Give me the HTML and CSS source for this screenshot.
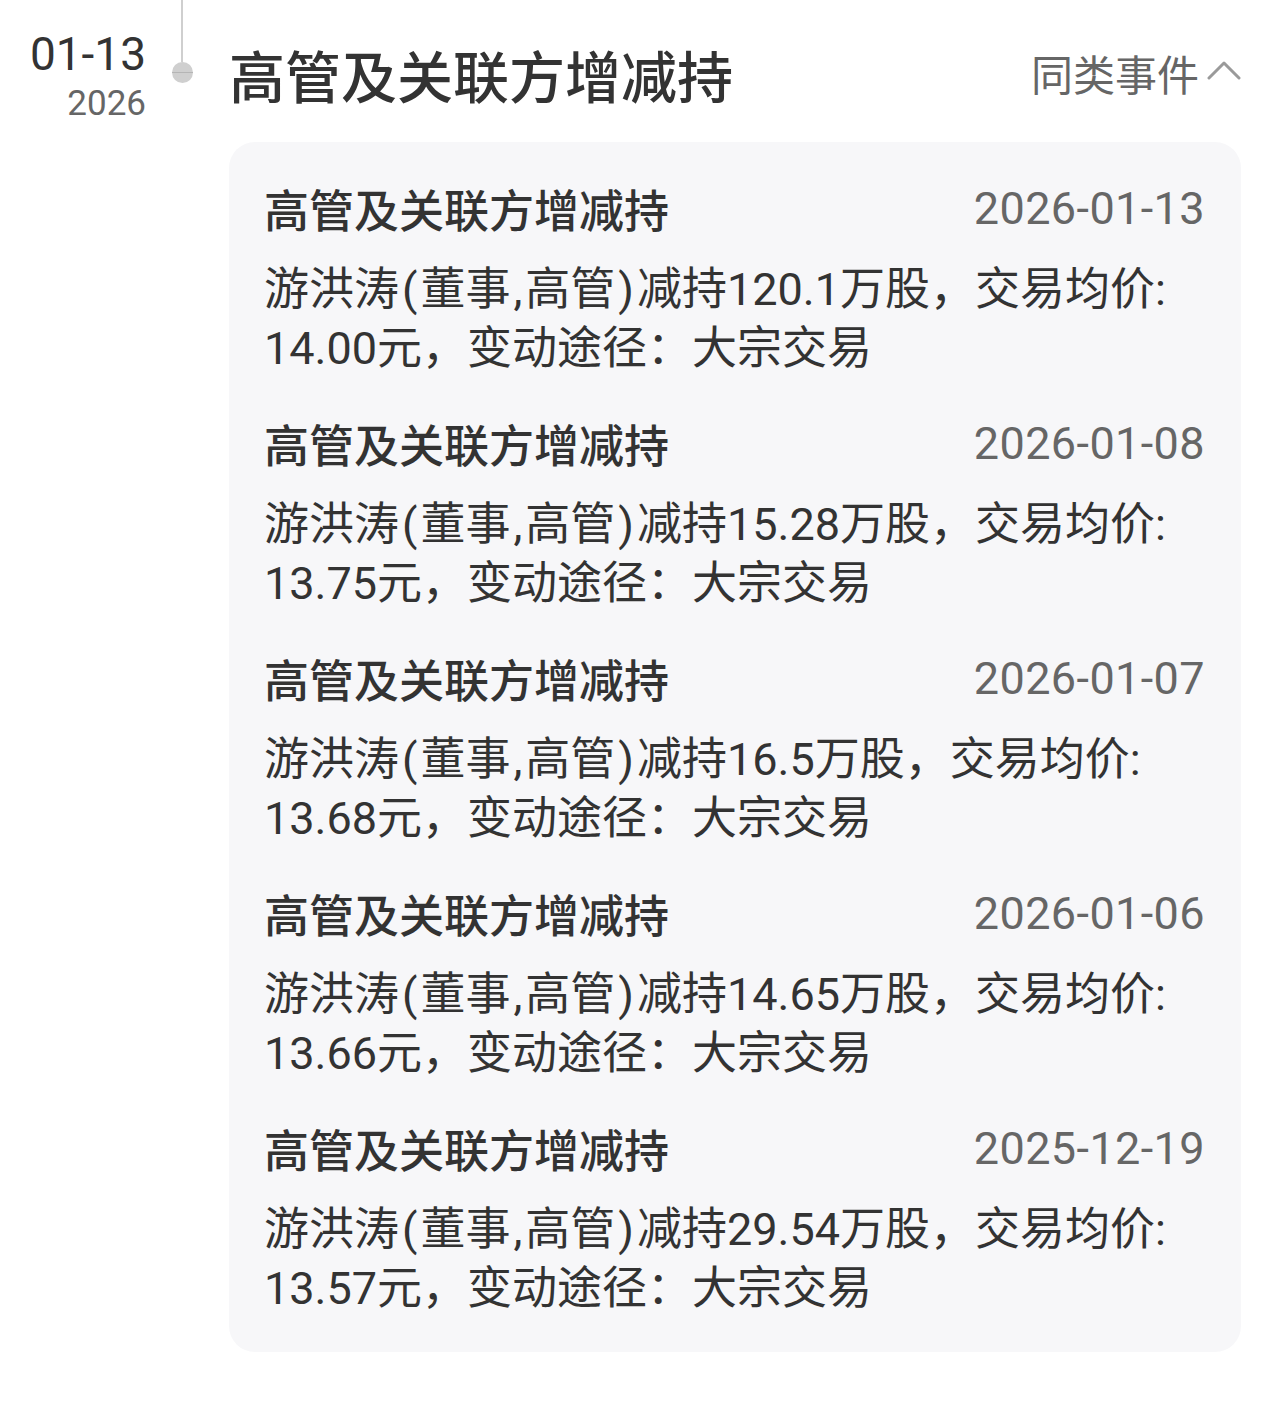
FILE: index.html
```html
<!DOCTYPE html>
<html lang="zh-CN">
<head>
    <meta charset="UTF-8">
    <meta name="viewport" content="width=device-width, initial-scale=1.0">
    <title>高管及关联方增减持</title>
    <link rel="stylesheet" href="styles.css">
</head>
<body>
    <div class="event">
        <div class="event-date">
            <div class="day">01-13</div>
            <div class="year">2026</div>
        </div>

        <div class="axis">
            <div class="axis-line"></div>
            <div class="axis-dot"></div>
        </div>

        <div class="event-body">
            <header class="event-header">
                <h1 class="event-title">高管及关联方增减持</h1>
                <a href="#" class="similar-toggle">
                    同类事件
                    <svg class="chevron" width="34" height="22" viewBox="0 0 34 22">
                        <polyline points="2,19 17,4 32,19" fill="none" stroke="#9a9a9a" stroke-width="3" stroke-linecap="round" stroke-linejoin="round"/>
                    </svg>
                </a>
            </header>

            <section class="similar-list">
                <article class="similar-item">
                    <div class="item-head">
                        <span class="item-title">高管及关联方增减持</span>
                        <span class="item-date">2026-01-13</span>
                    </div>
                    <p class="item-text">游洪涛<span class="p">(</span>董事<span class="p">,</span>高管<span class="p">)</span>减持120.1万股，交易均价:<br>14.00元，变动途径：大宗交易</p>
                </article>

                <article class="similar-item">
                    <div class="item-head">
                        <span class="item-title">高管及关联方增减持</span>
                        <span class="item-date">2026-01-08</span>
                    </div>
                    <p class="item-text">游洪涛<span class="p">(</span>董事<span class="p">,</span>高管<span class="p">)</span>减持15.28万股，交易均价:<br>13.75元，变动途径：大宗交易</p>
                </article>

                <article class="similar-item">
                    <div class="item-head">
                        <span class="item-title">高管及关联方增减持</span>
                        <span class="item-date">2026-01-07</span>
                    </div>
                    <p class="item-text">游洪涛<span class="p">(</span>董事<span class="p">,</span>高管<span class="p">)</span>减持16.5万股，交易均价:<br>13.68元，变动途径：大宗交易</p>
                </article>

                <article class="similar-item">
                    <div class="item-head">
                        <span class="item-title">高管及关联方增减持</span>
                        <span class="item-date">2026-01-06</span>
                    </div>
                    <p class="item-text">游洪涛<span class="p">(</span>董事<span class="p">,</span>高管<span class="p">)</span>减持14.65万股，交易均价:<br>13.66元，变动途径：大宗交易</p>
                </article>

                <article class="similar-item">
                    <div class="item-head">
                        <span class="item-title">高管及关联方增减持</span>
                        <span class="item-date">2025-12-19</span>
                    </div>
                    <p class="item-text">游洪涛<span class="p">(</span>董事<span class="p">,</span>高管<span class="p">)</span>减持29.54万股，交易均价:<br>13.57元，变动途径：大宗交易</p>
                </article>
            </section>
        </div>
    </div>
</body>
</html>
```

FILE: styles.css
```css
* {
    margin: 0;
    padding: 0;
    box-sizing: border-box;
}

body {
    font-family: Roboto, "Noto Sans CJK SC", sans-serif;
    background: #fff;
    color: #333;
    min-height: 100vh;
}

.event {
    display: flex;
    align-items: flex-start;
    padding-right: 35px;
}

/* left date column */
.event-date {
    width: 146px;
    flex-shrink: 0;
    text-align: right;
    padding-top: 26px;
}

.event-date .day {
    font-size: 46px;
    line-height: 56px;
    color: #333;
}

.event-date .year {
    font-size: 35px;
    line-height: 44px;
    color: #666;
}

/* timeline axis */
.axis {
    width: 72px;
    flex-shrink: 0;
    display: flex;
    flex-direction: column;
    align-items: center;
}

.axis-line {
    width: 2px;
    height: 62px;
    background: #cfcfcf;
}

.axis-dot {
    width: 21px;
    height: 21px;
    border-radius: 50%;
    background: #cfcfcf;
    position: relative;
}

.axis-dot::after {
    content: '';
    position: absolute;
    left: 0;
    right: 0;
    top: 10px;
    height: 1px;
    background: #b5b5b5;
}

/* event content */
.event-body {
    flex: 1;
    margin-left: 11px;
}

.event-header {
    display: flex;
    align-items: center;
    justify-content: space-between;
    padding-top: 35px;
    margin-bottom: 29px;
}

.event-title {
    font-family: "Noto Sans CJK SC", sans-serif;
    font-size: 56px;
    line-height: 78px;
    font-weight: 500;
    color: #333;
}

.similar-toggle {
    display: flex;
    align-items: center;
    gap: 8px;
    font-family: "Noto Sans CJK SC", sans-serif;
    font-size: 42px;
    color: #666;
    text-decoration: none;
    margin-top: -4px;
}

.chevron {
    margin-top: -4px;
}

.similar-list {
    background: #f7f7f9;
    border-radius: 26px;
    padding: 36px 36px 34px 35px;
    display: flex;
    flex-direction: column;
    gap: 35px;
}

.item-head {
    display: flex;
    justify-content: space-between;
    align-items: center;
    height: 60px;
    margin-bottom: 22px;
}

.item-title {
    font-family: "Noto Sans CJK SC", sans-serif;
    font-size: 45px;
    font-weight: 500;
    color: #333;
}

.item-date {
    font-size: 45px;
    letter-spacing: 0.4px;
    color: #666;
}

.item-text {
    font-size: 45px;
    line-height: 59px;
    color: #333;
}

/* half-width punctuation sits a little looser in the source font */
.item-text .p {
    padding: 0 3px;
}
```
